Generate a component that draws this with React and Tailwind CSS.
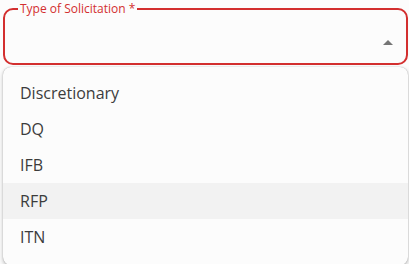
import React from "react";

const OPTIONS = ["Discretionary", "DQ", "IFB", "RFP", "ITN"];

const App = () => {
  return (
    <div
      className="w-[409px] h-[264px] bg-[#fcfcfc] overflow-hidden pl-[3px] pr-[1px]"
      style={{ fontFamily: '"Open Sans", "Noto Sans", sans-serif' }}
    >
      {/* Select field */}
      <fieldset className="relative mt-[2px] h-[63px] border-2 border-[#d32f2f] rounded-[10px] px-[12px] m-0">
        <legend className="px-[2px] text-[12px] leading-[14px] text-[#d32f2f] ml-[1px]">
          Type of Solicitation *
        </legend>
        <svg
          className="absolute right-[13px] top-[24px]"
          width="10"
          height="5"
          viewBox="0 0 10 5"
        >
          <path d="M0 5 L5 0 L10 5 Z" fill="#757575" />
        </svg>
      </fieldset>

      {/* Menu */}
      <ul className="mt-[2px] h-[198px] bg-[#fcfcfc] rounded-[8px] py-[8px] shadow-[0_2px_4px_rgba(0,0,0,0.25),0_0_1px_rgba(0,0,0,0.35)]">
        {OPTIONS.map((opt) => (
          <li
            key={opt}
            className={`h-[36px] flex items-center pl-[17px] text-[16px] text-[#3c3c3c] ${
              opt === "RFP" ? "bg-[#f2f2f2]" : ""
            }`}
          >
            {opt}
          </li>
        ))}
      </ul>
    </div>
  );
};

export default App;
